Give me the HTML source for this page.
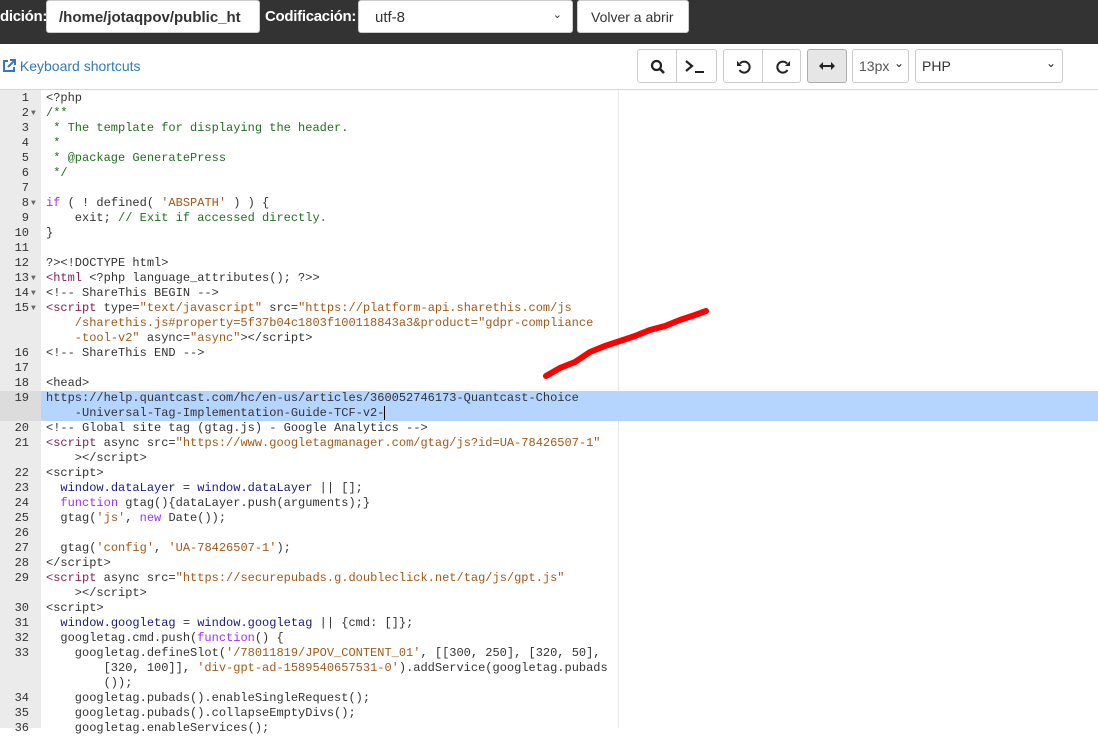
<!DOCTYPE html>
<html><head><meta charset="utf-8"><style>
*{box-sizing:border-box;margin:0;padding:0}
body{width:1098px;height:728px;overflow:hidden;background:#fff;font-family:"Liberation Sans",sans-serif;position:relative}
.top{position:absolute;left:0;top:0;width:1098px;height:44px;background:#333}
.lbl{position:absolute;color:#fff;font-weight:bold;font-size:15px;top:8px;letter-spacing:-0.3px}
.box{position:absolute;top:0;height:33px;background:#fff;border:1px solid #ccc;border-radius:3px;font-size:15px;color:#333;padding:8px 12px}
.tb{position:absolute;top:49px;height:34px;border:1px solid #ccc;border-radius:3px;background:#fff}
.tb svg{position:absolute}
.sep{position:absolute;top:0;width:1px;height:32px;background:#ccc}
.ks{position:absolute;left:2px;top:58px;font-size:14px;color:#337ab7}
.hr{position:absolute;left:0;top:89px;width:1098px;height:1px;background:#d6d6d6}
.gut{position:absolute;left:0;top:90px;width:41px;height:638px;background:#ebebeb}
.pm{position:absolute;left:618px;top:90px;width:1px;height:638px;background:#e8e8e8}
.code{position:absolute;left:0;top:91px;font-family:"Liberation Mono",monospace;font-size:12px;line-height:15px;color:#333}
.r{position:relative;height:15px;white-space:pre}
.n{position:absolute;left:0;width:29px;text-align:right;color:#333}
.f{position:absolute;left:31px;font-size:8px;color:#666}
.t{position:absolute;left:46px}
.c{color:#236e24}.k{color:#93f}.s{color:#1a1aa6}.st{color:#a05a1a}.tg{color:#882255}.v{color:#1a1a80}
.hl{background:#b5d5ff}
</style></head><body>
<div class="top"></div>
<div class="lbl" style="left:0">dición:</div>
<div class="box" style="left:46px;width:214px;font-weight:bold">/home/jotaqpov/public_ht</div>
<div class="lbl" style="left:265px">Codificación:</div>
<div class="box" style="left:358px;width:215px;padding-left:16px">utf-8<span style="position:absolute;right:10px;top:7px;font-size:11px">&#x2304;</span></div>
<div class="box" style="left:577px;width:112px;padding-left:13px;font-size:14px">Volver a abrir</div>

<div class="ks"><svg width="14" height="14" viewBox="0 0 14 14" style="vertical-align:-2px"><path d="M6 2H2v10h10V8" fill="none" stroke="#337ab7" stroke-width="2"/><path d="M8 1h5v5M13 1L6 8" fill="none" stroke="#337ab7" stroke-width="2"/></svg> Keyboard shortcuts</div>

<div class="tb" style="left:637px;width:80px">
<svg style="left:12px;top:9px" width="16" height="16" viewBox="0 0 16 16"><circle cx="6.5" cy="6.5" r="4.5" fill="none" stroke="#222" stroke-width="2.2"/><path d="M10 10l4 4" stroke="#222" stroke-width="2.6"/></svg>
<div class="sep" style="left:38px"></div>
<svg style="left:47px;top:10px" width="22" height="14" viewBox="0 0 22 14"><path d="M1 1l6 5-6 5" fill="none" stroke="#222" stroke-width="2.2"/><path d="M10 12h9" stroke="#222" stroke-width="2"/></svg>
</div>
<div class="tb" style="left:723px;width:78px">
<svg style="left:12px;top:9px" width="16" height="16" viewBox="0 0 16 16"><path d="M4 4.5A5.5 5.5 0 1 1 3.5 11" fill="none" stroke="#222" stroke-width="2"/><path d="M1 2v5h5z" fill="#222"/></svg>
<div class="sep" style="left:38px"></div>
<svg style="left:51px;top:9px" width="16" height="16" viewBox="0 0 16 16"><path d="M12 4.5A5.5 5.5 0 1 0 12.5 11" fill="none" stroke="#222" stroke-width="2"/><path d="M15 2v5h-5z" fill="#222"/></svg>
</div>
<div class="tb" style="left:807px;width:40px;background:#e6e6e6;border-color:#adadad">
<svg style="left:11px;top:11px" width="16" height="10" viewBox="0 0 16 10"><path d="M3 5h10" stroke="#222" stroke-width="2"/><path d="M0 5l4-4v8zM16 5l-4-4v8z" fill="#222"/></svg>
</div>
<div class="tb" style="left:852px;width:57px;font-size:14px;color:#555;padding:8px 6px">13px<span style="position:absolute;right:4px;top:6px;font-size:12px;color:#222">&#x2304;</span></div>
<div class="tb" style="left:915px;width:148px;font-size:14px;color:#333;padding:8px 6px">PHP<span style="position:absolute;right:6px;top:6px;font-size:12px;color:#222">&#x2304;</span></div>

<div class="hr"></div>
<div class="gut"></div>
<div class="pm"></div>
<div style="position:absolute;left:0;top:391px;width:1098px;height:30px;background:#b5d5ff"></div>
<div style="position:absolute;left:0;top:391px;width:41px;height:30px;background:#dcdcdc"></div>

<div class="code">
<div class="r"><span class="n">1</span><span class="t">&lt;?php</span></div>
<div class="r"><span class="n">2</span><span class="f">▼</span><span class="t c">/**</span></div>
<div class="r"><span class="n">3</span><span class="t c"> * The template for displaying the header.</span></div>
<div class="r"><span class="n">4</span><span class="t c"> *</span></div>
<div class="r"><span class="n">5</span><span class="t c"> * @package GeneratePress</span></div>
<div class="r"><span class="n">6</span><span class="t c"> */</span></div>
<div class="r"><span class="n">7</span></div>
<div class="r"><span class="n">8</span><span class="f">▼</span><span class="t"><span class="k">if</span> ( ! defined( <span class="st">'ABSPATH'</span> ) ) {</span></div>
<div class="r"><span class="n">9</span><span class="t">    exit; <span class="c">// Exit if accessed directly.</span></span></div>
<div class="r"><span class="n">10</span><span class="t">}</span></div>
<div class="r"><span class="n">11</span></div>
<div class="r"><span class="n">12</span><span class="t">?&gt;&lt;!DOCTYPE html&gt;</span></div>
<div class="r"><span class="n">13</span><span class="f">▼</span><span class="t"><span class="tg">&lt;html</span> &lt;?php language_attributes(); ?&gt;&gt;</span></div>
<div class="r"><span class="n">14</span><span class="f">▼</span><span class="t">&lt;!-- ShareThis BEGIN --&gt;</span></div>
<div class="r"><span class="n">15</span><span class="f">▼</span><span class="t"><span class="tg">&lt;script</span> type=<span class="st">"text/javascript"</span> src=<span class="st">"https://platform-api.sharethis.com/js</span></span></div>
<div class="r"><span class="t st">    /sharethis.js#property=5f37b04c1803f100118843a3&amp;product="gdpr-compliance</span></div>
<div class="r"><span class="t"><span class="st">    -tool-v2"</span> async=<span class="st">"async"</span>&gt;&lt;/script&gt;</span></div>
<div class="r"><span class="n">16</span><span class="t">&lt;!-- ShareThis END --&gt;</span></div>
<div class="r"><span class="n">17</span></div>
<div class="r"><span class="n">18</span><span class="t">&lt;head&gt;</span></div>
<div class="r"><span class="n">19</span><span class="t">https://help.quantcast.com/hc/en-us/articles/360052746173-Quantcast-Choice</span></div>
<div class="r"><span class="t">    -Universal-Tag-Implementation-Guide-TCF-v2-<span style="border-left:1px solid #000"></span></span></div>
<div class="r"><span class="n">20</span><span class="t">&lt;!-- Global site tag (gtag.js) - Google Analytics --&gt;</span></div>
<div class="r"><span class="n">21</span><span class="t"><span class="tg">&lt;script</span> async src=<span class="st">"https://www.googletagmanager.com/gtag/js?id=UA-78426507-1"</span></span></div>
<div class="r"><span class="t">    &gt;&lt;/script&gt;</span></div>
<div class="r"><span class="n">22</span><span class="t">&lt;script&gt;</span></div>
<div class="r"><span class="n">23</span><span class="t">  <span class="v">window.dataLayer</span> = <span class="v">window.dataLayer</span> || [];</span></div>
<div class="r"><span class="n">24</span><span class="t">  <span class="k">function</span> gtag(){dataLayer.push(arguments);}</span></div>
<div class="r"><span class="n">25</span><span class="t">  gtag(<span class="st">'js'</span>, <span class="k">new</span> Date());</span></div>
<div class="r"><span class="n">26</span></div>
<div class="r"><span class="n">27</span><span class="t">  gtag(<span class="st">'config'</span>, <span class="st">'UA-78426507-1'</span>);</span></div>
<div class="r"><span class="n">28</span><span class="t">&lt;/script&gt;</span></div>
<div class="r"><span class="n">29</span><span class="t"><span class="tg">&lt;script</span> async src=<span class="st">"https://securepubads.g.doubleclick.net/tag/js/gpt.js"</span></span></div>
<div class="r"><span class="t">    &gt;&lt;/script&gt;</span></div>
<div class="r"><span class="n">30</span><span class="t">&lt;script&gt;</span></div>
<div class="r"><span class="n">31</span><span class="t">  <span class="v">window.googletag</span> = <span class="v">window.googletag</span> || {cmd: []};</span></div>
<div class="r"><span class="n">32</span><span class="t">  googletag.cmd.push(<span class="k">function</span>() {</span></div>
<div class="r"><span class="n">33</span><span class="t">    googletag.defineSlot(<span class="st">'/78011819/JPOV_CONTENT_01'</span>, [[300, 250], [320, 50],</span></div>
<div class="r"><span class="t">        [320, 100]], <span class="st">'div-gpt-ad-1589540657531-0'</span>).addService(googletag.pubads</span></div>
<div class="r"><span class="t">        ());</span></div>
<div class="r"><span class="n">34</span><span class="t">    googletag.pubads().enableSingleRequest();</span></div>
<div class="r"><span class="n">35</span><span class="t">    googletag.pubads().collapseEmptyDivs();</span></div>
<div class="r"><span class="n">36</span><span class="t">    googletag.enableServices();</span></div>
</div>

<svg style="position:absolute;left:0;top:0" width="1098" height="728"><path d="M546 376 L560 368 L575 362 L590 352 L605 346 L620 341 L635 336 L650 330 L665 326 L680 320 L695 315 L706 311" fill="none" stroke="#f00" stroke-width="6" stroke-linecap="round"/></svg>
</body></html>
